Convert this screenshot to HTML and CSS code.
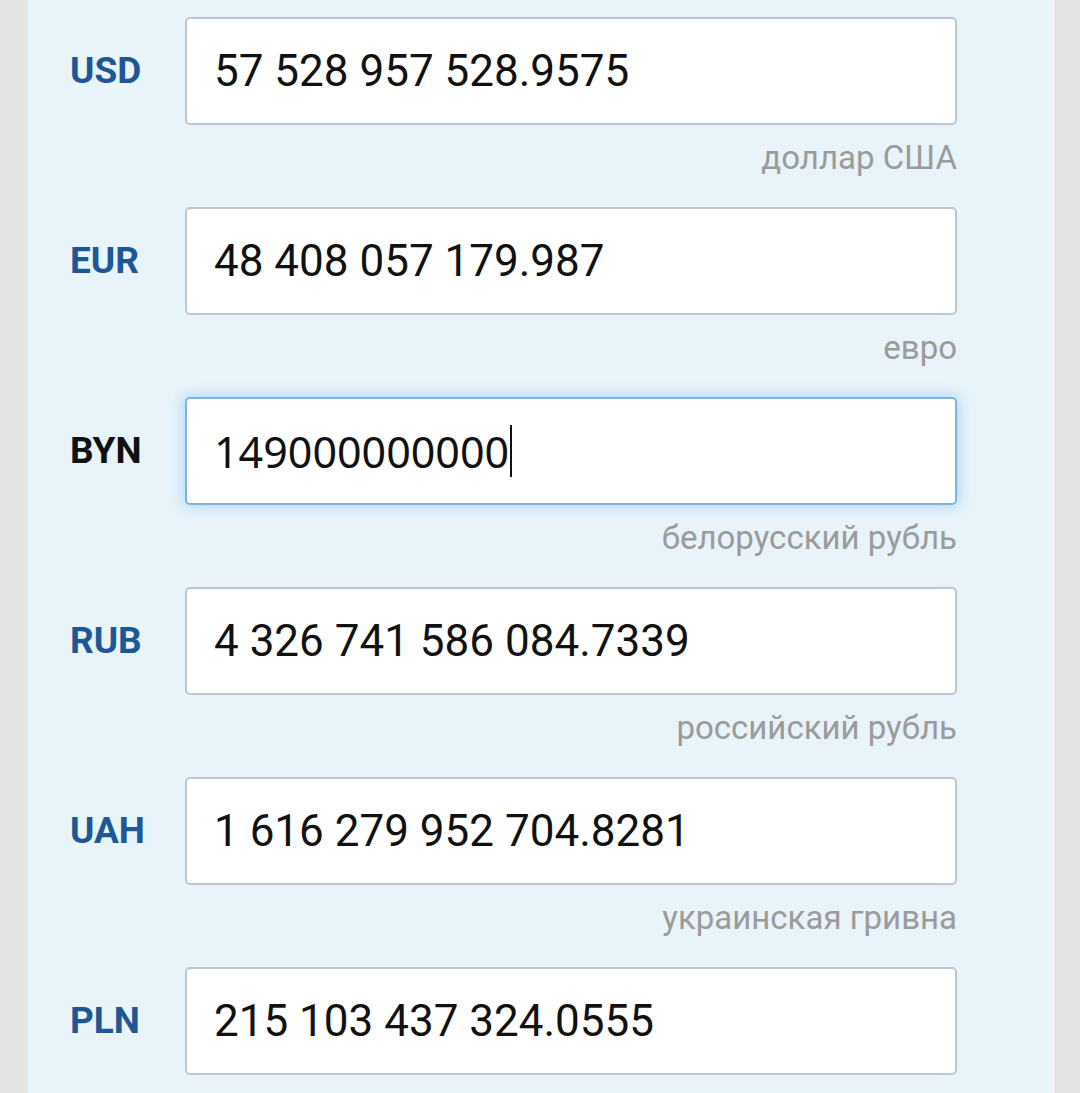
FILE: index.html
```html
<!DOCTYPE html>
<html lang="ru">
    <head>
        <meta charset="UTF-8" />
        <meta name="viewport" content="width=device-width, initial-scale=1.0" />
        <title>Конвертер валют</title>
        <link rel="stylesheet" href="styles.css">
    </head>
    <body>
        <div class="panel">
            <div class="row">
                <div class="code">USD</div>
                <div class="cell">
                    <div class="field"><span class="value">57 528 957 528.9575</span></div>
                    <div class="caption">доллар США</div>
                </div>
            </div>
            <div class="row">
                <div class="code">EUR</div>
                <div class="cell">
                    <div class="field"><span class="value">48 408 057 179.987</span></div>
                    <div class="caption">евро</div>
                </div>
            </div>
            <div class="row active">
                <div class="code">BYN</div>
                <div class="cell">
                    <div class="field"><span class="value">149000000000</span><span class="caret"></span></div>
                    <div class="caption">белорусский рубль</div>
                </div>
            </div>
            <div class="row">
                <div class="code">RUB</div>
                <div class="cell">
                    <div class="field"><span class="value">4 326 741 586 084.7339</span></div>
                    <div class="caption">российский рубль</div>
                </div>
            </div>
            <div class="row">
                <div class="code">UAH</div>
                <div class="cell">
                    <div class="field"><span class="value">1 616 279 952 704.8281</span></div>
                    <div class="caption">украинская гривна</div>
                </div>
            </div>
            <div class="row">
                <div class="code">PLN</div>
                <div class="cell">
                    <div class="field"><span class="value">215 103 437 324.0555</span></div>
                </div>
            </div>
        </div>
    </body>
</html>
```

FILE: styles.css
```css
* {
    box-sizing: border-box;
}
body {
    margin: 0;
    background-color: #e4e4e4;
    font-family: Roboto, "Noto Sans", sans-serif;
    height: 1093px;
    overflow: hidden;
}
.panel {
    margin: 0 26px 0 28px;
    background-color: #e8f4fa;
    border-right: 1px solid #f2f8fb;
    padding: 17px 96px 0 42px;
    min-height: 1093px;
}
.row {
    display: grid;
    grid-template-columns: 115px 1fr;
    margin-bottom: 16px;
}
.code {
    height: 108px;
    display: flex;
    align-items: center;
    font-size: 37px;
    font-weight: 700;
    color: #1e5796;
    padding-bottom: 2px;
}
.field {
    height: 108px;
    display: flex;
    align-items: center;
    padding-left: 27px;
    background-color: white;
    border: 2px solid #bcc7ce;
    border-radius: 5px;
    font-size: 44px;
    color: #111;
}
.caption {
    height: 66px;
    line-height: 66px;
    text-align: right;
    font-size: 33px;
    color: #9b9b9b;
}
.active .code {
    color: #111;
}
.active .field {
    border-color: #80b3d9;
    box-shadow: 0 0 14px 2px rgba(130, 190, 235, 0.55);
    font-family: "Noto Sans", Roboto, sans-serif;
    font-size: 43px;
}
.caret {
    display: inline-block;
    width: 2px;
    height: 52px;
    margin-left: 1px;
    background-color: #111;
}
```
